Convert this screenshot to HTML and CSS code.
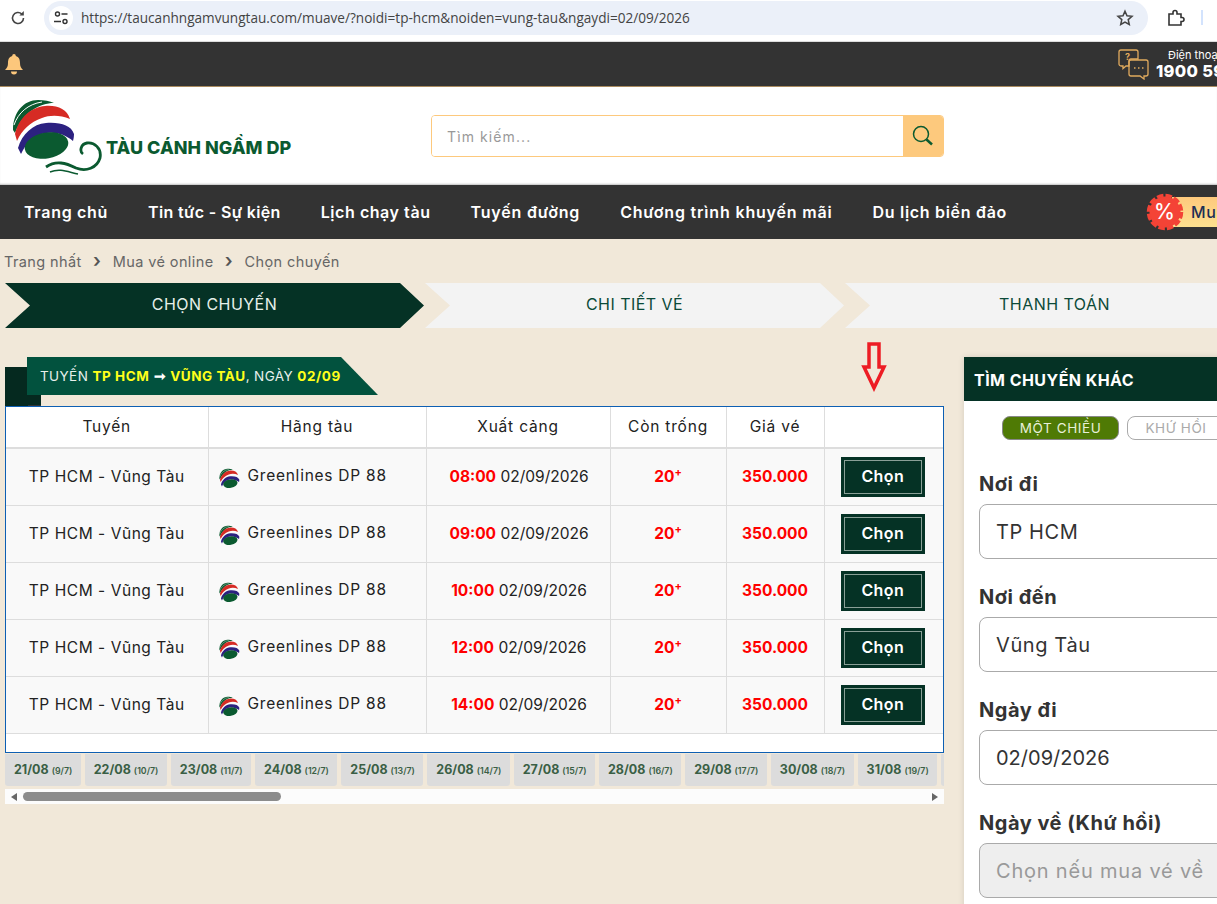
FILE: index.html
```html
<!DOCTYPE html>
<html lang="vi">
<head>
  <meta charset="UTF-8" />
  <meta name="viewport" content="width=device-width, initial-scale=1.0"/>
  <title>Tàu Cánh Ngầm DP - Chọn chuyến</title>
  <link rel="stylesheet" href="styles.css">
</head>
<body>
  <svg class="defs" aria-hidden="true">
    <symbol id="ball" viewBox="12 98 64 64">
      <path fill="#0b5a30" d="M13 130C13 112 24 100 38 100C44 100 50 101 54 103C40 103 23 112 15 133Z"/>
      <path fill="none" stroke="#fff" d="M14 125C18 113 28 104 42 102"/>
      <path fill="#d62b24" d="M15 134C19 117 32 107 45 106C57 105 67 109 70 119C60 115 50 115 42 118C30 122 22 130 17 141Z"/>
      <path fill="#2c2180" d="M18 148C22 134 33 124 46 123C60 122 71 125 74 134C74 137 73.5 139 73 141C64 133 52 131 42 134C32 137 25 145 21 154Z"/>
      <ellipse fill="#0b5a30" cx="46.5" cy="145.5" rx="22" ry="13" transform="rotate(-10 46.5 145.5)"/>
    </symbol>
  </svg>

  <div class="browser-bar">
    <svg class="reload" width="18" height="18" viewBox="0 0 18 18"><path d="M14.5 9a5.5 5.5 0 1 1-1.7-4" fill="none" stroke="#444" stroke-width="1.6"/><path d="M14.8 2v4.4h-4.4z" fill="#444"/></svg>
    <div class="url-pill">
      <span class="tune">
        <svg width="16" height="16" viewBox="0 0 16 16" fill="none" stroke="#333" stroke-width="1.4"><circle cx="4.5" cy="4" r="2"/><path d="M8.5 4h6M1 11.5h7"/><circle cx="12" cy="11.5" r="2"/></svg>
      </span>
      <span class="url">https://taucanhngamvungtau.com/muave/?noidi=tp-hcm&amp;noiden=vung-tau&amp;ngaydi=02/09/2026</span>
      <svg class="star" width="18" height="18" viewBox="0 0 18 18"><path d="M9 2.2l2 4.6 5 .5-3.8 3.3 1.1 4.9L9 13l-4.3 2.5 1.1-4.9L2 7.3l5-.5z" fill="none" stroke="#444" stroke-width="1.5"/></svg>
    </div>
    <svg class="puzzle" width="18" height="18" viewBox="0 0 18 18"><path d="M2 5h4V3.5a2 2 0 0 1 4 0V5h4v3.5h1a2 2 0 0 1 0 4h-1V16H2z" fill="none" stroke="#333" stroke-width="1.6"/></svg>
    <span class="bar-tick"></span>
  </div>

  <div class="topbar">
    <svg width="18" height="21" viewBox="0 0 18 21"><path fill="#fcc77c" d="M9 0a1.8 1.8 0 0 1 1.8 1.9C14 2.8 15 5.5 15 9c0 3.5 1 5 3 7H0c2-2 3-3.5 3-7 0-3.5 1-6.2 4.2-7.100A1.8 1.8 0 0 1 9 0zM6 17.5h6a3 3 0 0 1-6 0z"/></svg>
    <div class="hotline">
      <svg width="31" height="31" viewBox="0 0 31 31" fill="none" stroke="#e0aa5e" stroke-width="1.3"><path d="M3 1h15a2 2 0 0 1 2 2v7H13a2 2 0 0 0-2 2v5H8l-3 2.5V17H3a2 2 0 0 1-2-2V3a2 2 0 0 1 2-2z"/><path d="M13 11h15a2 2 0 0 1 2 2v12a2 2 0 0 1-2 2h-2v3l-4-3h-9a2 2 0 0 1-2-2V13a2 2 0 0 1 2-2z"/><text x="7" y="11" font-size="9" fill="#e0aa5e" stroke="none" font-family="Inter" font-weight="700">?</text><path d="M16 19h1.5M20 19h1.5M24 19h1.5" stroke-width="1.5"/></svg>
      <div class="hotline-text">
        <span class="hotline-label">Điện thoại</span>
        <strong class="hotline-number">1900 59</strong>
      </div>
    </div>
  </div>

  <header class="site-header">
    <div class="logo">
      <svg class="logo-mark" width="90" height="80" viewBox="12 97 90 80">
        <use href="#ball" x="12" y="98" width="64" height="64"/>
        <path d="M46 167C56 160 66 163 76 168C86 172 97 168 100 158C102 148 94 142 87 143C81 144 79 151 83 154" fill="none" stroke="#0b5a30" stroke-width="2.8"/>
        <path d="M50 172C60 168 68 172 78 174" fill="none" stroke="#0b5a30" stroke-width="1.5"/>
      </svg>
      <span class="logo-text">TÀU CÁNH NGẦM DP</span>
    </div>
    <div class="search">
      <input class="search-input" type="text" placeholder="Tìm kiếm...">
      <button class="search-btn" type="button" aria-label="Tìm kiếm">
        <svg width="22" height="22" viewBox="0 0 22 22" fill="none" stroke="#0b5a30"><circle cx="9" cy="9" r="7.5" stroke-width="1.5"/><path d="M14.5 14.5l5.5 5" stroke-width="2.5"/></svg>
      </button>
    </div>
  </header>

  <nav class="main-nav">
    <a href="#">Trang chủ</a>
    <a href="#" class="tight">Tin tức - Sự kiện</a>
    <a href="#" class="snug">Lịch chạy tàu</a>
    <a href="#" class="wide">Tuyến đường</a>
    <a href="#" class="wide">Chương trình khuyến mãi</a>
    <a href="#">Du lịch biển đảo</a>
    <div class="promo">
      <span class="promo-badge">
        <svg width="38" height="38" viewBox="0 0 38 38"><circle cx="19" cy="19" r="15.5" fill="#f44336"/><circle cx="19" cy="19" r="16.5" fill="none" stroke="#f44336" stroke-width="3.5" stroke-dasharray="6.5 2.14"/></svg>
        <span class="promo-percent">%</span>
      </span>
      <span class="promo-label">Mua vé</span>
    </div>
  </nav>

  <div class="breadcrumb">
    <a href="#">Trang nhất</a><span class="sep">›</span><a href="#">Mua vé online</a><span class="sep">›</span><span>Chọn chuyến</span>
  </div>

  <div class="steps">
    <div class="step active">CHỌN CHUYẾN</div>
    <div class="step">CHI TIẾT VÉ</div>
    <div class="step">THANH TOÁN</div>
  </div>

  <main class="content">
    <section class="results">
      <svg class="red-arrow" width="26" height="50" viewBox="0 0 26 50"><path d="M8 2h10v23h5L13 46 3 25h5z" fill="none" stroke="#ed1c24" stroke-width="3.5"/></svg>
      <div class="route-head">
        <div class="route-tag">TUYẾN <b>TP HCM</b> <span class="arrow">➞</span> <b>VŨNG TÀU</b>, NGÀY <b>02/09</b></div>
      </div>
      <div class="table-box">
        <table class="trips">
          <colgroup>
            <col class="c-route"><col class="c-line"><col class="c-time"><col class="c-seat"><col class="c-price"><col class="c-btn">
          </colgroup>
          <thead>
            <tr><th>Tuyến</th><th>Hãng tàu</th><th>Xuất cảng</th><th>Còn trống</th><th>Giá vé</th><th></th></tr>
          </thead>
          <tbody>
            <tr>
              <td class="route">TP HCM - Vũng Tàu</td>
              <td class="line"><svg width="21" height="21"><use href="#ball"/></svg>Greenlines DP 88</td>
              <td class="time"><b class="red">08:00</b> 02/09/2026</td>
              <td><b class="red">20<sup>+</sup></b></td>
              <td><b class="red">350.000</b></td>
              <td><button class="pick" type="button">Chọn</button></td>
            </tr>
            <tr>
              <td class="route">TP HCM - Vũng Tàu</td>
              <td class="line"><svg width="21" height="21"><use href="#ball"/></svg>Greenlines DP 88</td>
              <td class="time"><b class="red">09:00</b> 02/09/2026</td>
              <td><b class="red">20<sup>+</sup></b></td>
              <td><b class="red">350.000</b></td>
              <td><button class="pick" type="button">Chọn</button></td>
            </tr>
            <tr>
              <td class="route">TP HCM - Vũng Tàu</td>
              <td class="line"><svg width="21" height="21"><use href="#ball"/></svg>Greenlines DP 88</td>
              <td class="time"><b class="red">10:00</b> 02/09/2026</td>
              <td><b class="red">20<sup>+</sup></b></td>
              <td><b class="red">350.000</b></td>
              <td><button class="pick" type="button">Chọn</button></td>
            </tr>
            <tr>
              <td class="route">TP HCM - Vũng Tàu</td>
              <td class="line"><svg width="21" height="21"><use href="#ball"/></svg>Greenlines DP 88</td>
              <td class="time"><b class="red">12:00</b> 02/09/2026</td>
              <td><b class="red">20<sup>+</sup></b></td>
              <td><b class="red">350.000</b></td>
              <td><button class="pick" type="button">Chọn</button></td>
            </tr>
            <tr>
              <td class="route">TP HCM - Vũng Tàu</td>
              <td class="line"><svg width="21" height="21"><use href="#ball"/></svg>Greenlines DP 88</td>
              <td class="time"><b class="red">14:00</b> 02/09/2026</td>
              <td><b class="red">20<sup>+</sup></b></td>
              <td><b class="red">350.000</b></td>
              <td><button class="pick" type="button">Chọn</button></td>
            </tr>
          </tbody>
        </table>
      </div>
      <div class="date-strip">
        <a href="#" class="day">21/08 <small>(9/7)</small></a>
        <a href="#" class="day">22/08 <small>(10/7)</small></a>
        <a href="#" class="day">23/08 <small>(11/7)</small></a>
        <a href="#" class="day">24/08 <small>(12/7)</small></a>
        <a href="#" class="day">25/08 <small>(13/7)</small></a>
        <a href="#" class="day">26/08 <small>(14/7)</small></a>
        <a href="#" class="day">27/08 <small>(15/7)</small></a>
        <a href="#" class="day">28/08 <small>(16/7)</small></a>
        <a href="#" class="day">29/08 <small>(17/7)</small></a>
        <a href="#" class="day">30/08 <small>(18/7)</small></a>
        <a href="#" class="day">31/08 <small>(19/7)</small></a>
        <span class="day day-cut"></span>
      </div>
      <div class="fake-scroll">
        <span class="arrow-left"></span>
        <span class="thumb"></span>
        <span class="arrow-right"></span>
      </div>
    </section>

    <aside class="finder">
      <h2 class="finder-title">TÌM CHUYẾN KHÁC</h2>
      <div class="finder-body">
        <div class="trip-type">
          <span class="pill pill-on">MỘT CHIỀU</span>
          <span class="pill">KHỨ HỒI</span>
        </div>
        <label class="field-label">Nơi đi</label>
        <input class="field" type="text" value="TP HCM">
        <label class="field-label">Nơi đến</label>
        <input class="field" type="text" value="Vũng Tàu">
        <label class="field-label">Ngày đi</label>
        <input class="field field-date" type="text" value="02/09/2026">
        <label class="field-label">Ngày về (Khứ hồi)</label>
        <input class="field field-off" type="text" placeholder="Chọn nếu mua vé về" disabled>
      </div>
    </aside>
  </main>
</body>
</html>
```

FILE: styles.css
```css
* { margin: 0; padding: 0; box-sizing: border-box; }
html, body { height: 904px; overflow: hidden; }
body {
  width: 1217px;
  font-family: Inter, "Noto Sans", sans-serif;
  background-color: #f1e8d9;
  color: #222;
}
a { color: inherit; text-decoration: none; }
.defs { position: absolute; width: 0; height: 0; }

/* browser chrome */
.browser-bar {
  display: flex;
  align-items: center;
  height: 42px;
  padding: 0 0 6px 9px;
  background-color: #fff;
  border-bottom: 1px solid #ddd;
}
.url-pill {
  display: flex;
  align-items: center;
  width: 1104px;
  height: 34px;
  margin-left: 17px;
  padding: 0 14px 0 5px;
  border-radius: 17px;
  background-color: #ebf0f9;
}
.tune {
  display: flex;
  align-items: center;
  justify-content: center;
  width: 24px;
  height: 24px;
  border-radius: 50%;
  background-color: #fff;
}
.url {
  margin-left: 8px;
  font-family: "Open Sans", sans-serif;
  font-size: 13.6px;
  color: #444;
  white-space: nowrap;
}
.star { margin-left: auto; }
.puzzle { margin-left: 19px; flex: none; }
.bar-tick { width: 2px; height: 15px; margin-left: 16px; background-color: #d3e3fd; flex: none; }

.topbar {
  display: flex;
  align-items: center;
  justify-content: space-between;
  height: 45px;
  padding-left: 5px;
  background-color: #333;
  border-bottom: 1px solid #a98b5f;
}
.hotline { display: flex; align-items: center; gap: 7px; width: 99px; flex: none; overflow: hidden; }
.hotline svg { flex: none; }
.hotline-text { display: flex; flex-direction: column; align-items: flex-end; white-space: nowrap; color: #fff; }
.hotline-label { font-size: 11px; line-height: 13px; align-self: flex-start; margin-left: 12px; }
.hotline-number { font-size: 16.5px; line-height: 18px; font-weight: 800; letter-spacing: .3px; }

.site-header {
  display: flex;
  align-items: center;
  height: 98px;
  padding: 0 0 0 12px;
  background-color: #fff;
  box-shadow: inset 0 -2px 2px -1px rgba(0,0,0,.25);
}
.logo { position: relative; display: flex; align-items: flex-end; width: 419px; height: 80px; margin-top: 2px; }
.logo-mark { flex: none; }
.logo-text {
  position: absolute;
  left: 94px;
  top: 40px;
  font-size: 18px;
  font-weight: 800;
  color: #0b5a30;
  white-space: nowrap;
}
.search {
  display: flex;
  width: 513px;
  height: 42px;
  border: 1px solid #fdc97d;
  border-radius: 4px;
  overflow: hidden;
}
.search-input {
  flex: 1;
  padding-left: 15px;
  border: none;
  outline: none;
  font-family: inherit;
  font-size: 14px;
  letter-spacing: 1.1px;
}
.search-input::placeholder { color: #999; }
.search-btn {
  display: flex;
  align-items: center;
  justify-content: center;
  width: 40px;
  border: none;
  background-color: #fdc97d;
}

.main-nav {
  display: flex;
  align-items: center;
  gap: 40px;
  width: 1217px;
  height: 54px;
  padding-left: 24px;
  overflow: hidden;
  background-color: #333;
  color: #fff;
  font-size: 16px;
  font-weight: 600;
  letter-spacing: .7px;
  white-space: nowrap;
}
.main-nav .tight { letter-spacing: .35px; }
.main-nav .snug { letter-spacing: .55px; }
.main-nav .wide { letter-spacing: .82px; }
.promo { display: flex; align-items: center; margin-left: 99px; flex: none; }
.promo-badge { position: relative; display: flex; z-index: 1; }
.promo-percent {
  position: absolute;
  left: 8px;
  top: 6px;
  font-size: 21px;
  font-weight: 500;
  letter-spacing: 0;
  color: #fff;
}
.promo-label {
  display: block;
  width: 120px;
  height: 30px;
  margin-left: -12px;
  padding-left: 19px;
  line-height: 30px;
  font-weight: 500;
  color: #1d2f55;
  background: linear-gradient(#fdc97d, #fde08f);
}

.breadcrumb {
  display: flex;
  align-items: center;
  height: 44px;
  padding-left: 4px;
  font-size: 14.5px;
  letter-spacing: .4px;
  color: #666;
}
.sep { width: 31px; text-align: center; font-size: 19px; font-weight: 600; color: #555; line-height: 14px; }

.steps { display: flex; width: 1217px; padding-left: 5px; height: 45px; overflow: hidden; }
.step {
  flex: none;
  width: 420px;
  padding: 0 1px 3px 0;
  display: flex;
  align-items: center;
  justify-content: center;
  font-size: 16px;
  letter-spacing: .45px;
  color: #0b4a38;
  background-color: #f3f3f3;
  clip-path: polygon(0 0, 395px 0, 419px 50%, 395px 100%, 0 100%, 25px 50%);
}
.step.active { background-color: #053225; color: #e6f0ea; }

.content { display: flex; align-items: flex-start; gap: 20px; width: 1217px; height: 576px; padding: 29px 0 0 5px; overflow: hidden; }
.results { position: relative; flex: none; width: 939px; }
.red-arrow { position: absolute; left: 856px; top: -15px; }

.route-head { position: relative; height: 49px; }
.route-head::before {
  content: "";
  position: absolute;
  left: 0;
  top: 10px;
  width: 36px;
  height: 39px;
  background: linear-gradient(to top right, #05291f 0 50%, #333 50%) 22px 38px / 14px 11px no-repeat, #05291f;
}
.route-tag {
  position: relative;
  width: 351px;
  height: 38px;
  margin-left: 22px;
  padding-left: 13px;
  line-height: 38px;
  font-size: 13.5px;
  letter-spacing: .4px;
  color: #e8f0ec;
  background-color: #02523e;
  white-space: nowrap;
  clip-path: polygon(0 0, 314px 0, 100% 100%, 0 100%);
}
.route-tag b { color: #ffff1a; font-weight: 700; letter-spacing: .55px; }
.route-tag .arrow { color: #fff; font-size: 14px; font-weight: 700; }

.table-box {
  height: 347px;
  border: 1px solid #0d5fb3;
  background-color: #fff;
}
.trips { width: 100%; border-collapse: collapse; table-layout: fixed; font-size: 15.5px; }
.c-route { width: 202px; }
.c-line { width: 218px; }
.c-time { width: 184px; }
.c-seat { width: 116px; }
.c-price { width: 98px; }
.trips th {
  height: 41px;
  padding-bottom: 2px;
  font-weight: 400;
  letter-spacing: .8px;
  background-color: #fff;
  border-left: 1px solid #ddd;
  border-bottom: 2px solid #ddd;
}
.trips th:first-child, .trips td:first-child { border-left: none; }
.trips td {
  height: 57px;
  text-align: center;
  background-color: #f9f9f9;
  border-left: 1px solid #ddd;
  border-bottom: 1px solid #ddd;
  white-space: nowrap;
}
.trips td.route { letter-spacing: .55px; }
.trips td.line { text-align: left; padding-left: 10px; letter-spacing: .75px; }
.trips td.time { padding-left: 2px; }
.line svg { vertical-align: -6px; margin-right: 8px; transform: translateY(2px); }
.red { color: #f00; font-weight: 700; }
.red sup { font-size: 11px; line-height: 0; }
.pick {
  width: 84px;
  height: 40px;
  margin: 1px 0 0 -2px;
  padding-bottom: 2px;
  border: none;
  outline: 1px solid #8aa097;
  outline-offset: -4px;
  background-color: #053225;
  color: #fff;
  font-family: inherit;
  font-size: 16px;
  font-weight: 600;
  letter-spacing: .4px;
}

.date-strip { display: flex; gap: 4px; height: 32px; margin-top: 1px; overflow: hidden; }
.day {
  flex: none;
  padding: 0 8.5px 0 9px;
  line-height: 32px;
  font-size: 12.5px;
  font-weight: 700;
  color: #3a5f45;
  background-color: #dcdcdc;
  border-radius: 0 0 3px 3px;
  white-space: nowrap;
}
.day small { font-size: 8.8px; font-weight: 600; }
.day-cut { width: 20px; }

.fake-scroll {
  display: flex;
  align-items: center;
  height: 15px;
  margin-top: 3px;
  padding: 0 6px;
  background-color: #fcfcfc;
}
.arrow-left { border: 4px solid transparent; border-right: 6px solid #666; border-left: none; }
.thumb { width: 258px; height: 9px; margin-left: 6px; border-radius: 5px; background-color: #8c8c8c; }
.arrow-right { margin-left: auto; border: 4px solid transparent; border-left: 6px solid #666; border-right: none; }

.finder {
  flex: none;
  width: 300px;
  background-color: #fff;
  box-shadow: 0 0 6px rgba(0,0,0,.12);
}
.finder-title {
  height: 44px;
  padding-left: 10px;
  line-height: 46px;
  font-size: 16px;
  font-weight: 700;
  letter-spacing: .45px;
  color: #fff;
  background-color: #053225;
}
.finder-body { padding: 15px 15px 0; }
.trip-type { display: flex; gap: 8px; margin-left: 23px; height: 49px; }
.pill {
  flex: none;
  width: 98px;
  height: 24px;
  line-height: 22px;
  text-align: center;
  font-size: 13.5px;
  letter-spacing: .6px;
  color: #aaa;
  border: 1px solid #aaa;
  border-radius: 8px;
}
.pill-on { width: 117px; background-color: #4f7a05; color: #e8f0d8; border-color: #888; }
.field-label {
  display: block;
  height: 39px;
  padding-top: 7px;
  font-size: 20px;
  font-weight: 700;
  letter-spacing: .5px;
  line-height: 24px;
  color: #333;
}
.field {
  display: block;
  width: 100%;
  height: 55px;
  margin-bottom: 19px;
  padding-left: 16px;
  border: 1px solid #aaa;
  border-radius: 8px;
  background-color: #fff;
  font-family: inherit;
  font-size: 20px;
  letter-spacing: .6px;
  color: #333;
}
.field-date { letter-spacing: 0; }
.field-off { background-color: #eee; letter-spacing: .8px; }
.field-off::placeholder { color: #999; }
```
